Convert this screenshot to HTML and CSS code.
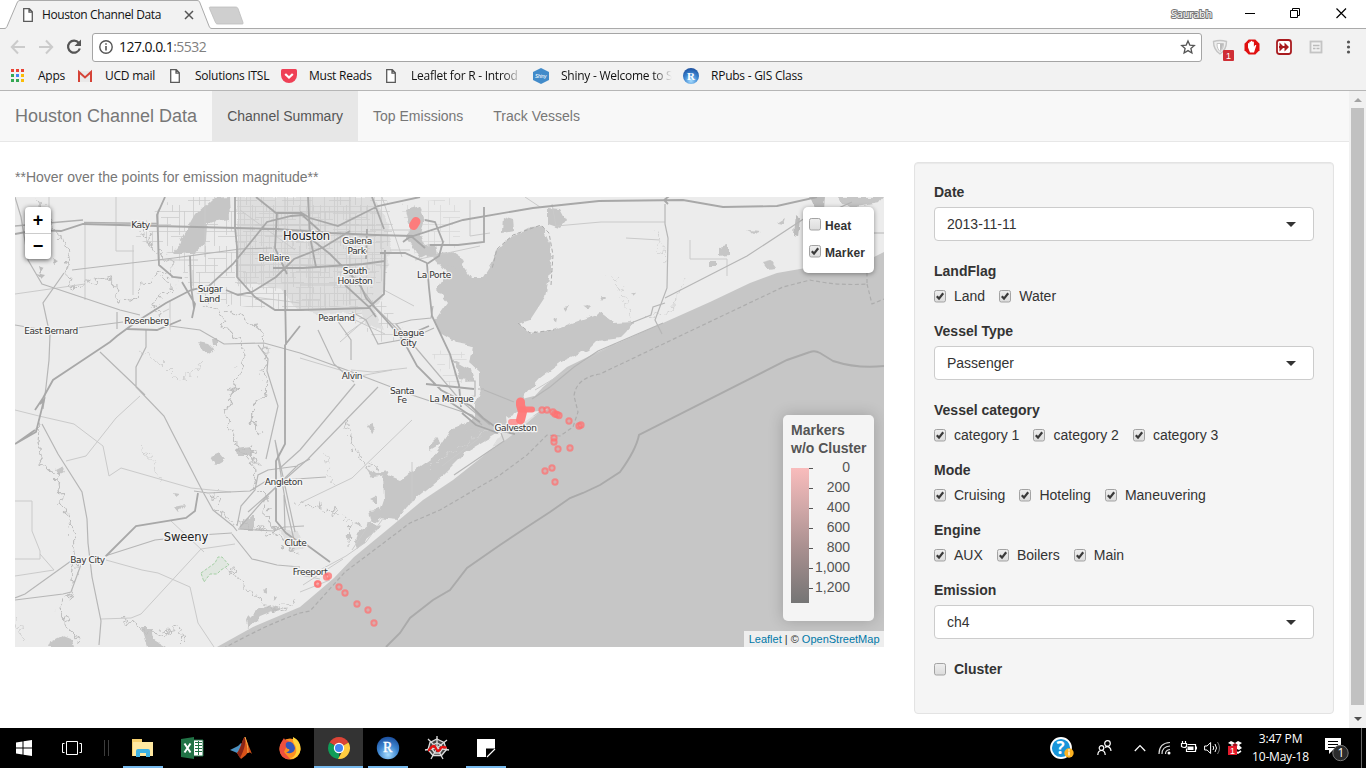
FILE: index.html
```html
<!DOCTYPE html>
<html lang="en">
<head>
<meta charset="utf-8">
<title>Houston Channel Data</title>
<link rel="stylesheet" href="styles.css">
</head>
<body>
<svg class="defs" width="0" height="0" aria-hidden="true">
  <defs>
    <linearGradient id="boxfill" x1="0" y1="0" x2="0" y2="1"><stop offset="0" stop-color="#eee"/><stop offset="1" stop-color="#dcdcdc"/></linearGradient>
    <radialGradient id="rball" cx=".5" cy=".8" r=".8"><stop offset="0" stop-color="#a5dcff"/><stop offset=".55" stop-color="#3c84cf"/><stop offset="1" stop-color="#1c4f9e"/></radialGradient>
    <symbol id="box" viewBox="0 0 13 13"><rect x=".5" y=".5" width="11" height="11.5" rx="1.8" fill="url(#boxfill)" stroke="#a3a3a3"/></symbol>
    <symbol id="checked" viewBox="0 0 13 13"><rect x=".5" y=".5" width="11" height="11.5" rx="1.8" fill="url(#boxfill)" stroke="#a3a3a3"/><path d="M2.8 6.2 5 8.6 9.2 3.2" fill="none" stroke="#3a3a3a" stroke-width="2.2"/></symbol>
    <symbol id="doc" viewBox="0 0 16 16"><path d="M3.7 1.7h5.6l3 3v9.6H3.7zM9 2v3.2h3.2" fill="#fff" stroke="#5a5a5a" stroke-width="1.3"/></symbol>
  </defs>
</svg>
<div class="window">
  <header class="tabstrip">
    <svg class="tabshape" width="250" height="29"><path d="M0 28.5h4c2 0 2.500-1 3-2L17 3c1-2 1.500-2.500 3-2.500h177c2 0 2.500 1 3 2.500l9 23c.6 1.600 1.200 2.500 3 2.500h38V29H0z" fill="#f2f2f2"/><path d="M0 28.500h4c2 0 2.500-1 3-2L17 3c1-2 1.500-2.500 3-2.500h177c2 0 2.500 1 3 2.500l9 23c.6 1.600 1.200 2.500 3 2.500h38" fill="none" stroke="#aaa"/><path d="M210 7h25c2 0 2.500.5 3 1.500l5 14c.4 1 0 1.500-1 1.500h-24c-1.500 0-2-.4-2.500-1.500l-6-14c-.4-1 0-1.500.5-1.500z" fill="#cfcfcf" stroke="#bdbdbd" stroke-width=".8"/></svg>
    <div class="tab"><svg width="16" height="16"><use href="#doc"/></svg><span class="tabtitle">Houston Channel Data</span><svg width="10" height="10" class="tabclose"><path d="M1 1l8 8M9 1 1 9" stroke="#555" stroke-width="1.500"/></svg></div>
    <span class="user">Saurabh</span>
    <svg class="winbtns" width="112" height="28"><g fill="none" stroke="#000"><path d="M9 13.500h10"/><path d="M54.500 10.500h7v7h-7zM56.500 10V8.500h7v7H62"/><path d="M100.500 8.500l9.500 9.500M110 8.500l-9.500 9.500" stroke-width="1.200"/></g></svg>
  </header>
  <div class="toolbar">
    <svg width="92" height="30"><g fill="none" stroke="#cbcbcb" stroke-width="2"><path d="M25 15H12M18 8.500 11.800 15 18 21.500"/><path d="M39 15h13M46 8.500 52.200 15 46 21.500"/></g><path d="M78.800 11A6 6 0 1 0 79.800 16.500" fill="none" stroke="#555" stroke-width="2.200"/><path d="M81 7.500v6.500h-6.500z" fill="#555"/></svg>
    <div class="address"><svg width="16" height="16"><circle cx="8" cy="8" r="6.200" fill="none" stroke="#555" stroke-width="1.400"/><path d="M8 7v4.500M8 4.200v1.600" stroke="#555" stroke-width="1.600"/></svg><span class="url">127.0.0.1<i>:5532</i></span><svg width="16" height="16"><path d="M8 1.900l1.800 4.200 4.500.4-3.400 3 1 4.500L8 11.600 4.100 14l1-4.500-3.400-3 4.500-.4z" fill="none" stroke="#555" stroke-width="1.300"/></svg></div>
    <svg width="164" height="34"><path d="M11.500 9.500q6.500-2 13 0c0 6-2 9.500-6.500 12.500-4.500-3-6.500-6.500-6.500-12.500z" fill="#eee" stroke="#c4c4c4" stroke-width="1.400"/><path d="M15 11.500h6.500c0 4-1 6-3.500 8-2-2-3-4-3-8z" fill="#fff" stroke="#c4c4c4"/><path d="M18 12v7c2-2 3-4 3-7z" fill="#bbb"/><rect x="21" y="18" width="11" height="11" rx="1" fill="#cf2e35"/><text x="24" y="27.300" class="badge">1</text><path d="M48.700 7.500h6.600l4.200 4.200v6.600l-4.200 4.200h-6.600l-4.200-4.200v-6.600z" transform="translate(-2)" fill="#e01010"/><path d="M46 15.500v-4q.7-1 1.400 0V10q.8-1 1.500 0V9.200q.8-.9 1.500 0V10q.9-.9 1.500.2v4.600l1.200-1.800q1.200-.4 1.200.6L52 20.500h-4z" fill="#fff"/><rect x="75" y="8" width="14" height="14" rx="2.500" fill="#fff" stroke="#a91b1f" stroke-width="1.800"/><path d="M77.500 10.500 82 15l-4.500 4.500zM82.500 10.500 87 15l-4.500 4.500zM77 14h9v2h-9z" fill="#a91b1f"/><rect x="108.500" y="9.500" width="11" height="11" fill="#f2f2f2" stroke="#c4c4c4" stroke-width="1.800"/><path d="M111 13.500h6.500M111 16.500h2.500m1 0h3" stroke="#bbb" stroke-width="1.400"/><g fill="#555"><circle cx="146.500" cy="10" r="1.600"/><circle cx="146.500" cy="15" r="1.600"/><circle cx="146.500" cy="20" r="1.600"/></g></svg>
  </div>
  <div class="bookmarks">
    <div class="bm w67"><svg width="16" height="16"><path d="M1 1h3v3H1zM6 1h3v3H6zM11 1h3v3h-3z" fill="#ea4335"/><path d="M1 6h3v3H1zM1 11h3v3H1zM6 11h3v3H6z" fill="#34a853"/><path d="M6 6h3v3H6z" fill="#4285f4"/><path d="M11 6h3v3h-3zM11 11h3v3h-3z" fill="#fbbc05"/></svg><span>Apps</span></div>
    <div class="bm w90"><svg width="16" height="16"><path d="M1 3h14v11H1z" fill="#e9e9e9"/><path d="M2 14V4l6 5.500L14 4v10" fill="none" stroke="#d54337" stroke-width="2"/></svg><span>UCD mail</span></div>
    <div class="bm w114"><svg width="16" height="16"><use href="#doc"/></svg><span>Solutions ITSL</span></div>
    <div class="bm w102"><svg width="16" height="16"><path d="M1.500 1h13q1.500 0 1.500 1.500V7a8 8 0 0 1-16 0V2.500Q0 1 1.500 1z" fill="#ef4056"/><path d="M4.200 6 8 9.600 11.800 6" fill="none" stroke="#fff" stroke-width="2.200"/></svg><span>Must Reads</span></div>
    <div class="bm w150"><svg width="16" height="16"><use href="#doc"/></svg><span class="fade">Leaflet for R - Introd</span></div>
    <div class="bm w150"><svg width="16" height="16"><path d="M8 0l8 4v8l-8 4-8-4V4z" fill="#428bca"/><text x="2" y="10" class="shiny">Shiny</text></svg><span class="fade">Shiny - Welcome to S</span></div>
    <div class="bm w130"><svg width="16" height="16"><circle cx="8" cy="8" r="8" fill="url(#rball)"/><text x="4" y="12" class="rsmall">R</text></svg><span>RPubs - GIS Class</span></div>
  </div>
  <div class="viewport">
    <div class="page">
      <nav class="navbar"><span class="brand">Houston Channel Data</span><span class="item active">Channel Summary</span><span class="item">Top Emissions</span><span class="item">Track Vessels</span></nav>
      <main class="content">
        <section class="left">
          <p class="hint">**Hover over the points for emission magnitude**</p>
          <div class="map">
<svg class="tiles" width="869" height="450" viewBox="15 197 869 450">
  <defs>
    <pattern id="streets" width="47" height="41" patternUnits="userSpaceOnUse"><path d="M0 6.500h47M0 19.500h30M8 26.500h39M0 36.500h22M5.500 0v41M17.500 0v26M26.500 12v29M38.500 0v30M43.500 6v20M11.500 26v15M31.500 0v7M20 12.500h18M30 31.500h17" fill="none" stroke="#cdcdcd" stroke-width=".8"/></pattern>
    <pattern id="dense" width="37" height="29" patternUnits="userSpaceOnUse"><path d="M0 3.500h37M0 10.500h24M12 16.500h25M0 22.500h37M4.500 0v29M10.500 3v14M16.500 0v29M22.500 10v13M28.500 0v29M33.500 3v14M0 26.500h16" fill="none" stroke="#cfcfcf" stroke-width=".8"/></pattern>
    <filter id="wiggle" x="-10%" y="-10%" width="120%" height="120%"><feTurbulence type="fractalNoise" baseFrequency=".13" numOctaves="2" seed="4"/><feDisplacementMap in="SourceGraphic" scale="17" xChannelSelector="R" yChannelSelector="G"/></filter>
    <filter id="shore" x="-5%" y="-5%" width="110%" height="110%"><feTurbulence type="fractalNoise" baseFrequency=".12" numOctaves="2" seed="9"/><feDisplacementMap in="SourceGraphic" scale="6" xChannelSelector="R" yChannelSelector="G"/></filter>
  </defs>
  <path d="M15 197h869v450H15z" fill="#ececec"/>
  <!-- built-up areas -->
  <path filter="url(#shore)" d="M237 197h136l14 22 4 30-6 26-2 24-18 12-46 4-22-6-16-20-44-8z" fill="#dedede"/>
  <path d="M150 215l30-22h205l8 30-6 50-20 30-60 8-60-4-40-6-20-15-8-28-44-20z" fill="url(#streets)"/>
  <path d="M237 197h142l6 60-18 45-70 8-12-18-48-6z" fill="url(#dense)"/>
  <path d="M350 300l30 0 20 20 6 20-24 2-34-24z" fill="url(#streets)"/>
  <path d="M400 204l60-7v50l-45 8z M430 350l34 2 10 28-26 6z" fill="url(#streets)" opacity=".6"/>
  <path filter="url(#shore)" d="M505 430l18-11 18-6-33 30-16 6zM280 530l18 2 6 16-14 4zM355 300l16 2 12 28-18-6z" fill="#dedede"/>
  <!-- open water -->
  <path d="M217 647 253 627 300 607 320 590 334 578 354 557 393 525 423 500 453 480 487 453 503 442 520 429 540 412 548 409 534 397 543 387 567 367 600 351 663 323 710 302 750 283 777 273 800 269 874 257 884 252V647z" fill="#c6c6c6"/>
  <path filter="url(#shore)" d="M522 404 524 396 540 378 563 361 588 350 597 341 620 338 626 332 634 322 613 323 600 313 580 320 553 330 530 333 518 324 530 320 545 297 552 263 550 243 542 226 530 227 510 237 497 250 492 263 483 277 470 277 460 263 450 258 433 257 447 273 437 290 447 303 435 320 440 333 457 343 473 346 470 363 480 372 480 390 475 403 475 420 450 430 433 457 400 480 383 473 384 500 378 518 397 520 410 503 443 476 467 452 497 434 508 428 506 418 516 414z" fill="#c6c6c6"/>
  <path d="M518 400l16-4 14 12-14 8-14-4z" fill="#c6c6c6"/>
  <g filter="url(#shore)" fill="#c6c6c6">
    <path d="M196 214 213 198 229 197 230 219 207 223 206 241 194 254 171 254 178 246z"/>
    <path d="M406 210l14-4 4 12-4 16 8 20-8 4-14-20 4-10zM548 208l12 1 6 11-6 8-12-4zM503 216l10 3 1 12-12 2zM425 246l10-2 2 12-10 2zM433 255l20-3 12 8-4 8-20-3z"/>
    <path d="M198 342l10 2 6 6-8 5zM212 338h6v9h-5zM210 457l10-4 5 6-10 6zM236 449l15-2v8l-14 0zM239 527l14-12v15h-13zM174 507l11-2-6 8zM173 494l6 1-4 3zM110 434l4 3M56 470l6-3 3 5-6 3z"/>
    <path d="M50 642l12-6 10 4 2 7H48zM142 628l10 0 2 12 12 7h-18zM246 620l10-10 16-5 8 4-20 8-12 11zM262 592l4-4 2 6zM273 595l4 2-3 5z"/>
    <path d="M370 510l10-2 2 9-9 6zM357 533l12-10 12 3-8 8-16 14-2-6zM344 536l6-3 3 5-6 3zM354 523l6-2 1 5zM370 500l8-4 0 8zM367 425l5-2 3 7-4 4zM430 445l8-8 2 7-10 6zM453 360l18 10 3 10-14-2zM463 425l12-8v10l-10 4zM365 465l10 8 14-2-2 4-14 2z"/>
    <path d="M838 197h46l-5 6-24 4-14-3zM720 247l8-2v10l-8 1zM710 260h6v6h-6zM763 263l8-2 5 7-9 1zM746 230l16 1-8 3zM778 223l8-5-2 6zM600 297l5 0-3 4zM563 307l6-1-3 5zM553 320l5-2-1 5zM584 307l7-2-3 5zM636 295l-5-2 3 4z"/>
    <path d="M810 197l15-2-1 16-9-3zM795 215l5 4-2 18-5-1zM52 258l7 3-4 3zM38 266l6 2-4 6zM36 273l9 2-4 4z" fill="#bcbcbc"/>
  </g>
  <path d="M506 416l11 8-10 2zM514 413l26-2-24 17-10 3z" fill="#ececec"/>
  <path d="M201 573 215 563 218 557 222 557 229 565 221 570 217 574 210 574 204 582z" fill="#e0e7e0" stroke="#a5cfa5" stroke-dasharray="3 1.500"/>
  <!-- rivers and bayous -->
  <g filter="url(#wiggle)" fill="none" stroke="#bebebe">
    <path d="M32 197 48 218 62 240 70 258 66 275 72 288 90 283 106 277 118 290 120 302 134 298 146 282 162 274 170 280 172 292 160 296 154 308 162 318M137 220l6 12 10 16 16 10 8 26" stroke-width="1.200"/>
    <path d="M205 304l14 10 8 14 12 12 5 16-6 20-6 16-6 20 4 14 6 18 12 14M226 308l24 14 12 10 6 20-5 20 4 16-8 10-8 18 8 20" stroke-width="1.300"/>
    <path d="M40 420l-2 22 5 22 14 10 3 24 10 22 3 24 2 26-4 24-12 14 10 20 10 14M250 447l6 20-2 14 14 20-2 16 14 20 8 10 10 8" stroke-width="1.300"/>
    <path d="M120 618l18 8 10 8 12-2 20-4 4 12-6 6M228 567l10 12 10 12 14 8 10 12 26-10M300 503l16 4 20 5 14 12-2 20M345 420l8 24 10 18 16 8M214 492l6 20 12 8 28 10 14 4"/>
    <path d="M140 350l20 12 16 16 20-4 10-14M140 448l14 12 5 20M24 640l-6-20M610 273l14 24 6 24M685 280l-14 30-30 10M655 230l8 30M325 455l8 30M430 470l14-14 20-10 26-18" stroke="#d2d2d2"/>
  </g>
  <!-- minor roads -->
  <g fill="none" stroke="#cacaca" stroke-width="1">
    <path d="M49 197v32M85 222v70l0 8M116 197v54h18M133 245v50M15 294l28-4 42-6M163 312l6-3M170 300v30M15 410l24 6 35 8 29 22 6 30 12-8 70 20 40 4M66 461l20-5 30-38 24-22M15 501h17v30l8 20v8H15M40 554l14 16-39 6M106 560l36 10 16 3 32 14 8 36 16 24M101 619l30-1 10-4 60-65 34-5M170 520l34 32"/>
    <path d="M158 210v50h40M205 197v60M193 270v16M238 295l62 8M240 210l55 40M300 212h80M310 197v110M350 197v108M300 265l70 4M300 285h60M255 225h120M285 197v115M370 230h40M390 250h20"/>
    <path d="M300 358l60 18 32-6M351 370l22 2 34-4M384 290l30 16M355 320l30 14M345 335l30-22M340 342l25-22M382 197l20 60M470 200v36l20-3M415 260l65-14M525 197l15 10M552 204l4 22 45-4h64M690 240v19h37v17M660 240l-34-2M300 503l52-25 60-58M412 462v40M442 466l40-30"/>
    <path d="M320 570l26-14 20-14 16-22M303 585l40-26M300 592l30-12M372 520l-20 30M300 575l20 4M535 390l40-24 40-22"/>
  </g>
  <g fill="none" stroke="#b6b6b6" stroke-width="1.200">
    <path d="M15 197l6 20 7 43 14 24 6 2 72 24 20 5M15 325l35 6M77 328l46-6M72 270l42-5 60-7 66-9 32-1M64 273l-21 30 7 32-1 25-3 27-3 22M146 330v17l-10 20v20l28 29 7 14 32 62 10 18 20 16 4 5M117 312v17M170 326l30 4 24 14 40-1 36 10M100 352l45 43M42 424l16 30 24 38 5 27 1 24 4 34 9 44-2 24M15 598l10-4 46-33M105 556l50-16 45-5 32-2M15 600l48-6 8-2 12-33M194 491l14 2 42-2 16-10 60-4M240 527l28-32 30-30 12-6M237 526l4-20 14-16 3-15 10-5 30-4M238 529l36 2 10-4 20-1M258 345l10 14-1 12 11 35-12 53M232 534l20 25 25 6 23 2M275 440l6 35 5 30 8 35M275 440l20 92M284 495l1 35"/>
    <path d="M300 353l52 19 60 23 60 20 10 10M378 387l-70 72-60 53M355 384l-55 66-20 18M337 320l14 20v20M318 330l16 34 20 18M350 273l26 35 40 40 44 52 30 25M352 312l14 8 12 24 34-6 22-10M401 330l-5-6 15-4 20-2 2-12M400 340l20-6M478 389h6M445 399l30-3v-15h-10M484 390l30 12M665 204v20l3 14-1 50-12 32 7 14M663 323l-65 28-24 16-24 20-18 12M665 298l82-42 58-38M665 303l-12 4-2 8-20 8M501 433l3 8-50 34M874 233h10M834 210l18-8"/>
  </g>
  <!-- highways -->
  <g fill="none" stroke="#a8a8a8" stroke-width="1.800">
    <path d="M15 234l22-4 24 1 22-7 74 2 120 3 54 4 44 2 38 1 50-16 70-12 66-7 84-1 40 7 54-1 40-9M35 410l8-12 10-18 27-18 30-20 7-6 19-14 30-19 25-13 18-4 24-22 34-42 24-6 12-1M127 329l30 1 24-10M165 197l-8 18 1 20 1 30 14 12 9 1M182 282l13 22-3 14M235 197v30l2 20v30l18 20 20 13h25l68-2 16-14 1-44M190 256l1 30 3 22M256 197l20 16h24l20 18M277 213l-2 35 12 26M226 290l12 5 14-3 24-15 18-18 30-12 26-16M273 268h30l60-4 22-3M300 230l30 24 30 30 6 14 20 22 17 20 14 26 24 24 30 16 12 12 18 13 14 3M367 229l-1 30M300 212l10 6 28 8 40-20 42-9M372 197l12 32M425 220l10 2 8 20-4 14-12 8 2 24 3 28 18 38 9 31 2 22M345 285l24 22 7 10M286 345l-1-55M285 345v99l-9 17v60l10 12 14 10M300 326l-15 19M430 245l28 0 26-3V207M403 242l8-6 14 12M413 333l16-7M426 384l48 5M380 253l25 0 22 10M668 204l-4-4 8-6M40 404l4-4-8 32-21 12M35 430l-20 14M106 556l30-30 50-8 9-7 3-18M300 540l30 22M462 413l14 12 22 8M444 398l36 24M308 197l2 40 6 30"/>
  </g>
  <path d="M84 222.500l73 1M15 226l22-2 46-4" fill="none" stroke="#b0b0b0" stroke-width="1.300"/>
  <path d="M386 647 400 633 410 618 433 600 450 590 467 568 500 545 527 527 550 512 570 498 583 493 600 485 620 472Q636 450 639 435L787 360 810 352Q815 350 820 353L833 361Q858 369 884 366" fill="none" stroke="#aaa" stroke-width="1.900"/>
  <path d="M217 652 Q265 625 300 613L310 611 345 572 410 523 440 510 500 475 527 455 547 435 560 436 573 427 578 412 574 396Q576 378 600 374L783 287 810 280Q838 286 867 284V272M867 284l5 20 12-5" fill="none" stroke="#adadad" stroke-width="1.200" stroke-dasharray="4 2.500"/>
  <path d="M518 323l12 10 24-3M551 285l2-30-4-22-8-8-28 10-16 14-5 20" fill="none" stroke="#adadad" stroke-dasharray="4 2.500"/>
  <g class="places" text-anchor="middle">
    <text x="140.500" y="227.500">Katy</text><text x="274" y="261">Bellaire</text><text x="210" y="292">Sugar</text><text x="209.500" y="302">Land</text><text x="146.500" y="323.500">Rosenberg</text><text x="51" y="334">East Bernard</text>
    <text x="357" y="244">Galena</text><text x="356.500" y="254">Park</text><text x="355" y="274">South</text><text x="355" y="284">Houston</text><text x="434" y="277.500">La Porte</text><text x="336.500" y="320.500">Pearland</text><text x="408.500" y="335.500">League</text><text x="408.500" y="345.500">City</text><text x="352" y="379">Alvin</text><text x="402" y="393.500">Santa</text><text x="402" y="403">Fe</text><text x="451.500" y="402">La Marque</text><text x="515.500" y="431">Galveston</text>
    <text x="283.500" y="485">Angleton</text><text x="295.500" y="545.500">Clute</text><text x="310" y="575">Freeport</text><text x="87.500" y="563">Bay City</text>
    <text x="306.500" y="240" class="big">Houston</text><text x="186" y="540.500" class="big">Sweeny</text>
  </g>
  <g fill="none" stroke="#ff7878" stroke-opacity=".95" stroke-linecap="round" stroke-linejoin="round">
    <path d="M416 221.500l-2.500 4" stroke-width="9"/><path d="M520.500 402v3l2 7-2 8" stroke-width="9"/><path d="M521 409.500h11" stroke-width="6"/><path d="M511 422h5" stroke-opacity=".7" stroke-width="6"/>
  </g>
  <g class="pts">
    <circle cx="542" cy="410" r="2.700"/><circle cx="547" cy="410" r="2.700"/><circle cx="553" cy="412" r="2.700"/><circle cx="555" cy="414" r="2.700"/><circle cx="557" cy="414.500" r="2.700"/><circle cx="559" cy="415.500" r="2.700"/><circle cx="569" cy="421" r="2.700"/><circle cx="579" cy="426" r="2.700"/><circle cx="581" cy="425" r="2.700"/><circle cx="554" cy="438" r="2.700"/><circle cx="554" cy="442" r="2.700"/><circle cx="558" cy="449" r="2.700"/><circle cx="570" cy="448" r="2.700"/><circle cx="552" cy="468" r="2.700"/><circle cx="545" cy="471" r="2.700"/><circle cx="555" cy="482" r="2.700"/>
    <circle cx="317.500" cy="584" r="2.700"/><circle cx="318" cy="584" r="2.700"/><circle cx="326.500" cy="577" r="2.700"/><circle cx="328.500" cy="576" r="2.700"/><circle cx="339" cy="587" r="2.700"/><circle cx="345" cy="593" r="2.700"/><circle cx="357" cy="604" r="2.700"/><circle cx="368" cy="610" r="2.700"/><circle cx="374" cy="623" r="2.700"/>
  </g>
</svg>
            <div class="zoomer"><span>+</span><span>−</span></div>
            <div class="layers"><label><svg width="13" height="13"><use href="#box"/></svg>Heat</label><label><svg width="13" height="13"><use href="#checked"/></svg>Marker</label></div>
            <div class="legend">
              <b>Markers<br>w/o Cluster</b>
              <div class="scale"><div class="ramp"></div><svg width="4" height="135"><path d="M0 .5h4m-4 20h4m-4 20h4m-4 20h4m-4 20h4m-4 20h4m-4 20h4" stroke="#555"/></svg><div class="nums"><span>0</span><span>200</span><span>400</span><span>600</span><span>800</span><span>1,000</span><span>1,200</span></div></div>
            </div>
            <div class="attrib"><a>Leaflet</a> | © <a>OpenStreetMap</a></div>
          </div>
        </section>
        <aside class="well">
          <div class="group"><b>Date</b><div class="select"><span>2013-11-11</span></div></div>
          <div class="group"><b>LandFlag</b><div class="checks"><label><svg width="13" height="13"><use href="#checked"/></svg>Land</label><label><svg width="13" height="13"><use href="#checked"/></svg>Water</label></div></div>
          <div class="group"><b>Vessel Type</b><div class="select"><span>Passenger</span></div></div>
          <div class="group"><b>Vessel category</b><div class="checks"><label><svg width="13" height="13"><use href="#checked"/></svg>category 1</label><label><svg width="13" height="13"><use href="#checked"/></svg>category 2</label><label><svg width="13" height="13"><use href="#checked"/></svg>category 3</label></div></div>
          <div class="group"><b>Mode</b><div class="checks"><label><svg width="13" height="13"><use href="#checked"/></svg>Cruising</label><label><svg width="13" height="13"><use href="#checked"/></svg>Hoteling</label><label><svg width="13" height="13"><use href="#checked"/></svg>Maneuvering</label></div></div>
          <div class="group"><b>Engine</b><div class="checks"><label><svg width="13" height="13"><use href="#checked"/></svg>AUX</label><label><svg width="13" height="13"><use href="#checked"/></svg>Boilers</label><label><svg width="13" height="13"><use href="#checked"/></svg>Main</label></div></div>
          <div class="group"><b>Emission</b><div class="select"><span>ch4</span></div></div>
          <div class="checks solo"><label><svg width="13" height="13"><use href="#box"/></svg><b>Cluster</b></label></div>
        </aside>
      </main>
    </div>
    <div class="scrollbar"><i class="up"></i><div class="thumb"></div><i class="down"></i></div>
  </div>
  <footer class="taskbar">
    <div class="cell c48"><svg width="18" height="18"><path d="M1 3.500l6.500-1v6H1zM8.500 2.300 17 1v7.500H8.500zM1 9.500h6.500v6l-6.500-1zM8.500 9.500H17V17l-8.500-1.200z" fill="#fff"/></svg></div>
    <div class="cell c48"><svg width="20" height="16"><path d="M4.500 1.500h11v13h-11zM2.500 3.500h-2v9h2M17.500 3.500h2v9h-2" fill="none" stroke="#fff"/></svg></div>
    <div class="cell c22"><svg width="6" height="16"><path d="M.5 0v16M4.500 0v16" stroke="#3c3c3c"/></svg></div>
    <div class="cell c49 run"><svg width="22" height="20"><path d="M0 1h10v3h11v14H0z" fill="#f6d06f"/><path d="M1 4h20v14H1z" fill="#ffe8a0"/><path d="M4 19v-6q0-2 2-2h10q2 0 2 2v6h-4v-4H8v4z" fill="#3eb1e3"/></svg></div>
    <div class="cell c49"><svg width="24" height="24"><path d="M11 4h12v16H11z" fill="#fff" stroke="#217346"/><path d="M15 6.500h7M15 9.500h7M15 12.500h7M15 15.500h7M18.500 5v14" stroke="#217346"/><path d="M1 3 14 1v22L1 21z" fill="#217346"/><path d="M4.500 7.500l6 9M10.500 7.500l-6 9" stroke="#fff" stroke-width="2"/></svg></div>
    <div class="cell c49"><svg width="24" height="24"><path d="M1 14l8-4 3-3 3 3-5 8-4-2z" fill="#4c91c1"/><path d="M8 17c4-4 5-14 8-16 2 4 5 12 7 17-2-2-4-2-6 1l-5 4z" fill="#d95319"/><path d="M16 1c1 6-1 14-5 21l-3-5c4-4 5-14 8-16z" fill="#8a2517"/><path d="M16 1c2 6 3 9 3 16" stroke="#f6b24a" fill="none"/></svg></div>
    <div class="cell c49"><svg width="24" height="24"><circle cx="12" cy="13" r="10.500" fill="#ff9021"/><path d="M1.500 12C2 7 5 4 6 2c1 3 3 2 5 3L6 16l6 7C6 24 1 19 1.500 12z" fill="#f0503c"/><path d="M15 1c6 3 8 8 7.500 13-1 5-5 9-11 9 6-2 8-7 6-13-2-3-3-5-2.500-9z" fill="#ffd43a"/><path d="M8 7c4-3 8 0 9 5 0 4-5 7-9 4 3 0 4-2 3-3-2 0-4-2-3-6z" fill="#3457bb"/></svg></div>
    <div class="cell c49 active run"><svg width="22" height="22"><path d="M11 11 1.500 5.500a11 11 0 0 1 19 0z" fill="#db4437"/><path d="M11 11V22A11 11 0 0 1 1.500 5.500z" fill="#0f9d58"/><path d="M11 11l9.500-5.500A11 11 0 0 1 10 22l5-9z" fill="#ffcd40"/><circle cx="11" cy="11" r="5.200" fill="#fff"/><circle cx="11" cy="11" r="4" fill="#4285f4"/></svg></div>
    <div class="cell c49 run"><svg width="24" height="24"><circle cx="12" cy="12" r="11.200" fill="url(#rball)"/><text x="7" y="16" class="rbig">R</text></svg></div>
    <div class="cell c49"><svg width="24" height="24"><path d="M12 3l7 3.500 2.500 7-5 6H8l-5-6L5 6.500z" fill="#444"/><g fill="none" stroke="#ddd" stroke-width="1.300"><path d="M12 3l7 3.500 2.500 7-5 6H8l-5-6L5 6.500zM12 7l4 2 1.500 4-3 4H10l-3-4L8 9z"/><path d="M12 0v12M3 3l9 9M22 4l-10 8M0 14l12-2M24 14l-12-2M6 23l6-11M18 23l-6-11"/></g><path d="M3 14.500c2 0 3-5 6-4.500 2 .5 2 5 4 5 2.500 0 2-4 4.500-4 1.500 0 2 1 4 0" fill="none" stroke="#e81010" stroke-width="2.400"/></svg></div>
    <div class="cell c49 run"><svg width="18" height="18"><path d="M0 0h18v9.500H9V18H0z" fill="#fff"/><path d="M10 18l8-8" stroke="#fff" stroke-width="1.100"/></svg></div>
    <div class="tray">
      <div class="cell t42"><svg width="24" height="24"><circle cx="12" cy="12" r="10" fill="#1795da" stroke="#fff" stroke-width="1.800"/><text x="7.500" y="18" class="help">?</text><circle cx="20" cy="17" r="4.700" fill="#fcb221"/><path d="M20 15.500v4M20 13.200v1.500" stroke="#fff" stroke-width="1.300"/></svg></div>
      <div class="cell t45"><svg width="16" height="16"><g fill="none" stroke="#fff" stroke-width="1.200"><circle cx="4.500" cy="8" r="2.300"/><path d="M.8 15q.2-4.500 3.700-4.500T8.200 15"/><circle cx="10.500" cy="3.500" r="2.800"/><path d="M8 7.500q2.500-2 4.500 0 1.500 1.500 1.500 3.500"/></g></svg></div>
      <div class="cell t26"><svg width="12" height="8"><path d="M.8 7 6 1.500 11.200 7" fill="none" stroke="#fff" stroke-width="1.200"/></svg></div>
      <div class="cell t24"><svg width="14" height="14"><g fill="none" stroke="#ddd" stroke-width="1.200"><path d="M1 13Q1 2 12 1.500M4 13Q4 5.500 12 5M7.500 13Q7.500 9 12 8.500"/></g><circle cx="11" cy="12" r="1.500" fill="#fff"/></svg></div>
      <div class="cell t23"><svg width="16" height="14"><path d="M6.500 3.500h8v7h-9V7.500M.5 2.500h5v3q-2 2-5 0zM1.500 0v2.500M4.500 0v2.500" fill="none" stroke="#fff" stroke-width="1.200"/><path d="M6.500 5.500h6v3.500h-6zM14.500 5.500h1.500v3h-1.500z" fill="#fff"/></svg></div>
      <div class="cell t23"><svg width="16" height="14"><path d="M.6 5h2.500l3.500-3.500v11L3.100 9H.6zM9 5q1.500 2 0 4M11 3q3 4 0 8" fill="none" stroke="#fff"/><path d="M13.500 1q4 6 0 12" fill="none" stroke="#777"/></svg></div>
      <div class="cell t24"><svg width="16" height="16"><path d="M1 3l3-2 4 2 3-2 4 2-3 2 3 3-3 2-4-2-3 2-3-3 3-2z" fill="#fff"/><path d="M5 5l3-2 3 2-3 2z" fill="#a10d1d"/><path d="M8 11l3 2 3-2" stroke="#fff" fill="none" stroke-width="1.600"/><path d="M1 6h9v9H1z" fill="#e51b2c"/><text x="3" y="13.500" class="badge">1</text></svg></div>
      <div class="clock"><span>3:47 PM</span><span>10-May-18</span></div>
      <div class="cell t47"><svg width="26" height="26"><path d="M0 5h16v12h-8l-4 4v-4H0z" transform="translate(0 -2)" fill="#fff"/><path d="M3 6.500h10M3 9.500h10M3 12.500h7" stroke="#000"/><circle cx="15.500" cy="18" r="7.700" fill="#2b2b2b" stroke="#777"/><text x="12.500" y="22" class="count">1</text></svg></div>
      <div class="desk"></div>
    </div>
  </footer>
</div>
</body>
</html>
```
FILE: styles.css
```css
* { box-sizing: border-box; }
body { margin: 0; font: 14px/20px "Liberation Sans", Arial, sans-serif; color: #333; background: #fff; overflow: hidden; }
svg { display: block; flex: none; overflow: visible; }
.defs { position: absolute; }
.window { width: 1366px; height: 768px; display: flex; flex-direction: column; }
.tabstrip, .toolbar, .bookmarks, .taskbar { font-family: "Open Sans", "Noto Sans", sans-serif; font-size: 12px; }
.tabstrip { position: relative; height: 29px; display: flex; border-bottom: 1px solid #aaa; }
.tabshape { position: absolute; left: 0; top: 0; }
.tab { position: relative; width: 210px; height: 29px; padding-left: 20px; display: flex; align-items: center; color: #111; }
.tabtitle { width: 142px; margin-left: 6px; letter-spacing: -.38px; white-space: nowrap; }
.user { margin-left: auto; font-size: 11px; line-height: 28px; color: #fff; letter-spacing: -.3px; -webkit-text-stroke: 2px #777; paint-order: stroke fill; }
.winbtns { margin-left: 24px; margin-right: 18px; }
.toolbar { height: 34px; background: #f2f2f2; display: flex; padding-top: 3px; }
.address { width: 1110px; height: 29px; margin-top: 1px; border: 1px solid #a5a5a5; border-radius: 3px; background: #fff; display: flex; align-items: center; padding: 0 5px 1px; }
.url { flex: 1; margin-left: 5px; padding-bottom: 1px; font-size: 14px; letter-spacing: -.54px; color: #111; }
.url i { font-style: normal; color: #808080; }
.bookmarks { height: 28px; background: #f2f2f2; border-bottom: 1px solid #b6b6b6; display: flex; padding: 0 0 1px 10px; color: #111; }
.bm { display: flex; align-items: center; gap: 12px; white-space: nowrap; letter-spacing: -.25px; }
.w67 { width: 67px; } .w90 { width: 90px; } .w114 { width: 114px; } .w102 { width: 102px; } .w150 { width: 150px; } .w130 { width: 130px; }
.fade { width: 112px; -webkit-mask-image: linear-gradient(90deg, #000 82%, transparent 99%); mask-image: linear-gradient(90deg, #000 82%, transparent 99%); }
.badge { font: 9px "Liberation Sans", sans-serif; fill: #fff; }
.shiny { font: italic 5px "Liberation Sans", sans-serif; fill: #fff; }
.rsmall { font: bold 11px "Liberation Serif", serif; fill: #fff; }
.rbig { font: 14px "Liberation Serif", serif; fill: #fff; stroke: #fff; stroke-width: .4px; }
.help { font: bold 17px "Open Sans", sans-serif; fill: #fff; }
.count { font: 12px "Open Sans", sans-serif; fill: #fff; }
.viewport { height: 637px; display: flex; }
.page { width: 1349px; }
.navbar { height: 51px; background: #f8f8f8; border-bottom: 1px solid #e7e7e7; display: flex; color: #777; line-height: 20px; }
.brand { font-size: 18px; padding: 15px; }
.item { padding: 15px; }
.active { background: #e7e7e7; color: #555; }
.content { display: flex; gap: 30px; padding: 20px 15px 0; }
.left { width: 869px; }
.hint { margin: 5px 0 10px; color: #777; }
.map { position: relative; width: 869px; height: 450px; overflow: hidden; background: #ececec; }
.places { font: 9px "DejaVu Sans", sans-serif; letter-spacing: -.36px; fill: #333; stroke: #f4f4f4; stroke-width: 2.5px; stroke-linejoin: round; paint-order: stroke fill; }
.big { font-size: 11.5px; letter-spacing: -.1px; fill: #222; }
.pts { fill: #ff7878; fill-opacity: .3; stroke: #ff7070; stroke-opacity: .72; stroke-width: 1.9px; }
.zoomer { position: absolute; left: 10px; top: 10px; width: 26px; border-radius: 4px; background: #fff; box-shadow: 0 1px 5px rgba(0,0,0,.65); font: bold 18px/26px "Liberation Sans", sans-serif; color: #000; text-align: center; }
.zoomer span { display: block; height: 26px; }
.zoomer span + span { border-top: 1px solid #ccc; line-height: 25px; }
.layers { position: absolute; right: 10px; top: 10px; width: 71px; height: 66px; border-radius: 5px; background: #fff; box-shadow: 0 1px 5px rgba(0,0,0,.4); padding: 10px 6px; font-size: 12px; font-weight: bold; letter-spacing: .1px; }
.layers label { display: flex; gap: 3px; height: 17px; line-height: 19px; margin-bottom: 10px; }
.layers svg { margin-top: 1px; }
.legend { position: absolute; right: 10px; top: 218px; width: 91px; height: 206px; border-radius: 5px; background: rgba(255,255,255,.8); box-shadow: 0 0 15px rgba(0,0,0,.2); padding: 6px 8px; line-height: 18px; color: #555; white-space: nowrap; }
.scale { display: flex; margin-top: 11px; }
.ramp { width: 18px; height: 135px; background: linear-gradient(#f9bcbc, #d3a9a9 28%, #a88f8f 60%, #757575); }
.nums { width: 37px; margin-top: -11px; display: flex; flex-direction: column; align-items: flex-end; line-height: 20px; }
.attrib { position: absolute; right: 0; bottom: 0; height: 16px; padding: 0 4.500px; background: rgba(255,255,255,.7); font-size: 11px; line-height: 16px; white-space: nowrap; }
.attrib a { color: #0078a8; }
.well { width: 420px; height: 552px; border: 1px solid #e3e3e3; border-radius: 4px; background: #f5f5f5; padding: 19px; box-shadow: inset 0 1px 1px rgba(0,0,0,.05); }
.group { margin-bottom: 15px; }
.group > b { display: block; margin-bottom: 5px; }
.select { height: 34px; border: 1px solid #ccc; border-radius: 4px; background: #fff; padding: 6px 17px 6px 12px; margin-bottom: 20px; display: flex; justify-content: space-between; align-items: center; }
.select::after { content: ""; border: 5px solid transparent; border-top-color: #333; border-bottom: 0; }
.checks { display: flex; gap: 14.1px; }
.checks label { display: flex; gap: 7px; }
.checks svg { margin-top: 4px; }
.solo { margin-top: 20px; }
.scrollbar { width: 17px; background: #f1f1f1; display: flex; flex-direction: column; align-items: center; }
.up, .down { width: 0; height: 0; border: 4px solid transparent; }
.up { border-bottom-color: #a3a3a3; border-top: 0; margin: 7px 0 6px; }
.down { border-top-color: #505050; border-bottom: 0; margin-top: 12px; }
.thumb { width: 13px; height: 597px; background: #c1c1c1; }
.taskbar { height: 40px; background: #000; display: flex; color: #fff; }
.cell { display: flex; align-items: center; justify-content: center; height: 40px; }
.c48 { width: 48px; } .c22 { width: 22px; } .c49 { width: 49px; }
.run { background: linear-gradient(#76b9ed, #76b9ed) center bottom / 40px 2px no-repeat; }
.run.active { background-color: #333; background-size: 100% 2px; }
.tray { margin-left: auto; display: flex; }
.t42 { width: 42px; } .t45 { width: 45px; } .t26 { width: 26px; } .t24 { width: 24px; } .t23 { width: 23px; } .t47 { width: 47px; }
.clock { width: 67px; display: flex; flex-direction: column; align-items: center; line-height: 18px; padding-top: 2px; letter-spacing: -.2px; }
.desk { width: 5px; border-left: 1px solid #666; }
```
